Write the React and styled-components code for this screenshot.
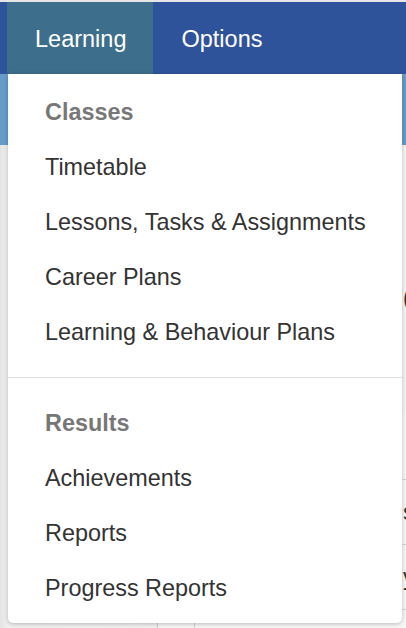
import React from "react";
import styled, { createGlobalStyle } from "styled-components";

const GlobalStyle = createGlobalStyle`
  html, body {
    margin: 0;
    padding: 0;
    background: #ececec;
    font-family: "Liberation Sans", Arial, sans-serif;
    overflow: hidden;
  }
`;

const Page = styled.div`
  position: relative;
  width: 406px;
  height: 628px;
  overflow: hidden;
  display: flex;
  flex-direction: column;
  background: #ececec;
`;

const TopStrip = styled.div`
  height: 2px;
  background: #e6e6e6;
  flex: none;
`;

const Navbar = styled.nav`
  height: 72px;
  flex: none;
  display: flex;
  padding-left: 7px;
  background: #2f539b;
`;

const NavItem = styled.div`
  display: flex;
  align-items: center;
  padding: 2px 27px 0 28px;
  color: #ffffff;
  font-size: 23.5px;
  background: ${(p) => (p.$active ? "#3d6e8c" : "transparent")};
`;

const Banner = styled.div`
  height: 71px;
  flex: none;
  background: #679bc9;
`;

const Content = styled.div`
  flex: 1;
  display: flex;
  flex-direction: column;
  background: linear-gradient(90deg, #e4e4e4 0px, #f0f0f0 8px, #f4f4f4 100%);
`;

const Intro = styled.div`
  height: 270px;
  flex: none;
  display: flex;
  align-items: flex-start;
  padding-top: 140px;
  box-sizing: border-box;
  padding-left: 403px;
  font-size: 23px;
  color: #333;
  white-space: nowrap;
`;

const Row = styled.div`
  height: 65px;
  flex: none;
  display: grid;
  grid-template-columns: 157px 37px 208px 1fr;
  box-sizing: border-box;
`;

const Cell = styled.div`
  display: flex;
  align-items: center;
  border-left: ${(p) => (p.$line ? "1px solid #cfcfcf" : "none")};
  border-bottom: ${(p) => (p.$gutter ? "none" : "1px solid #d6d6d6")};
  background: ${(p) => (p.$gutter ? "transparent" : "#f7f7f7")};
  font-size: 23px;
  color: #333;
  white-space: nowrap;
  overflow: hidden;
  padding-left: ${(p) => (p.$pad ? "1px" : "0")};
`;

const Menu = styled.div`
  position: absolute;
  top: 74px;
  left: 8px;
  width: 394px;
  box-sizing: border-box;
  padding: 11px 0 7px;
  background: #ffffff;
  border-radius: 0 0 5px 5px;
  box-shadow: 0 1px 4px rgba(0, 0, 0, 0.25);
`;

const MenuItem = styled.div`
  height: 55px;
  line-height: 55px;
  padding-left: 37px;
  font-size: 23.4px;
  color: ${(p) => (p.$header ? "#777777" : "#333333")};
  font-weight: ${(p) => (p.$header ? 700 : 400)};
  white-space: nowrap;
`;

const Divider = styled.div`
  height: 1px;
  margin: 17px 0 18px;
  background: #dedede;
`;

const rows = [
  { text: "" },
  { text: "s" },
  { text: "y" },
  { text: "" },
];

export default function App() {
  return (
    <>
      <GlobalStyle />
      <Page>
        <TopStrip />
        <Navbar>
          <NavItem $active>Learning</NavItem>
          <NavItem>Options</NavItem>
        </Navbar>
        <Banner />
        <Content>
          <Intro>(</Intro>
          {rows.map((r, i) => (
            <Row key={i}>
              <Cell $gutter />
              <Cell $line />
              <Cell $line />
              <Cell $pad>{r.text}</Cell>
            </Row>
          ))}
        </Content>
        <Menu>
          <MenuItem $header>Classes</MenuItem>
          <MenuItem>Timetable</MenuItem>
          <MenuItem>Lessons, Tasks &amp; Assignments</MenuItem>
          <MenuItem>Career Plans</MenuItem>
          <MenuItem>Learning &amp; Behaviour Plans</MenuItem>
          <Divider />
          <MenuItem $header>Results</MenuItem>
          <MenuItem>Achievements</MenuItem>
          <MenuItem>Reports</MenuItem>
          <MenuItem>Progress Reports</MenuItem>
        </Menu>
      </Page>
    </>
  );
}
